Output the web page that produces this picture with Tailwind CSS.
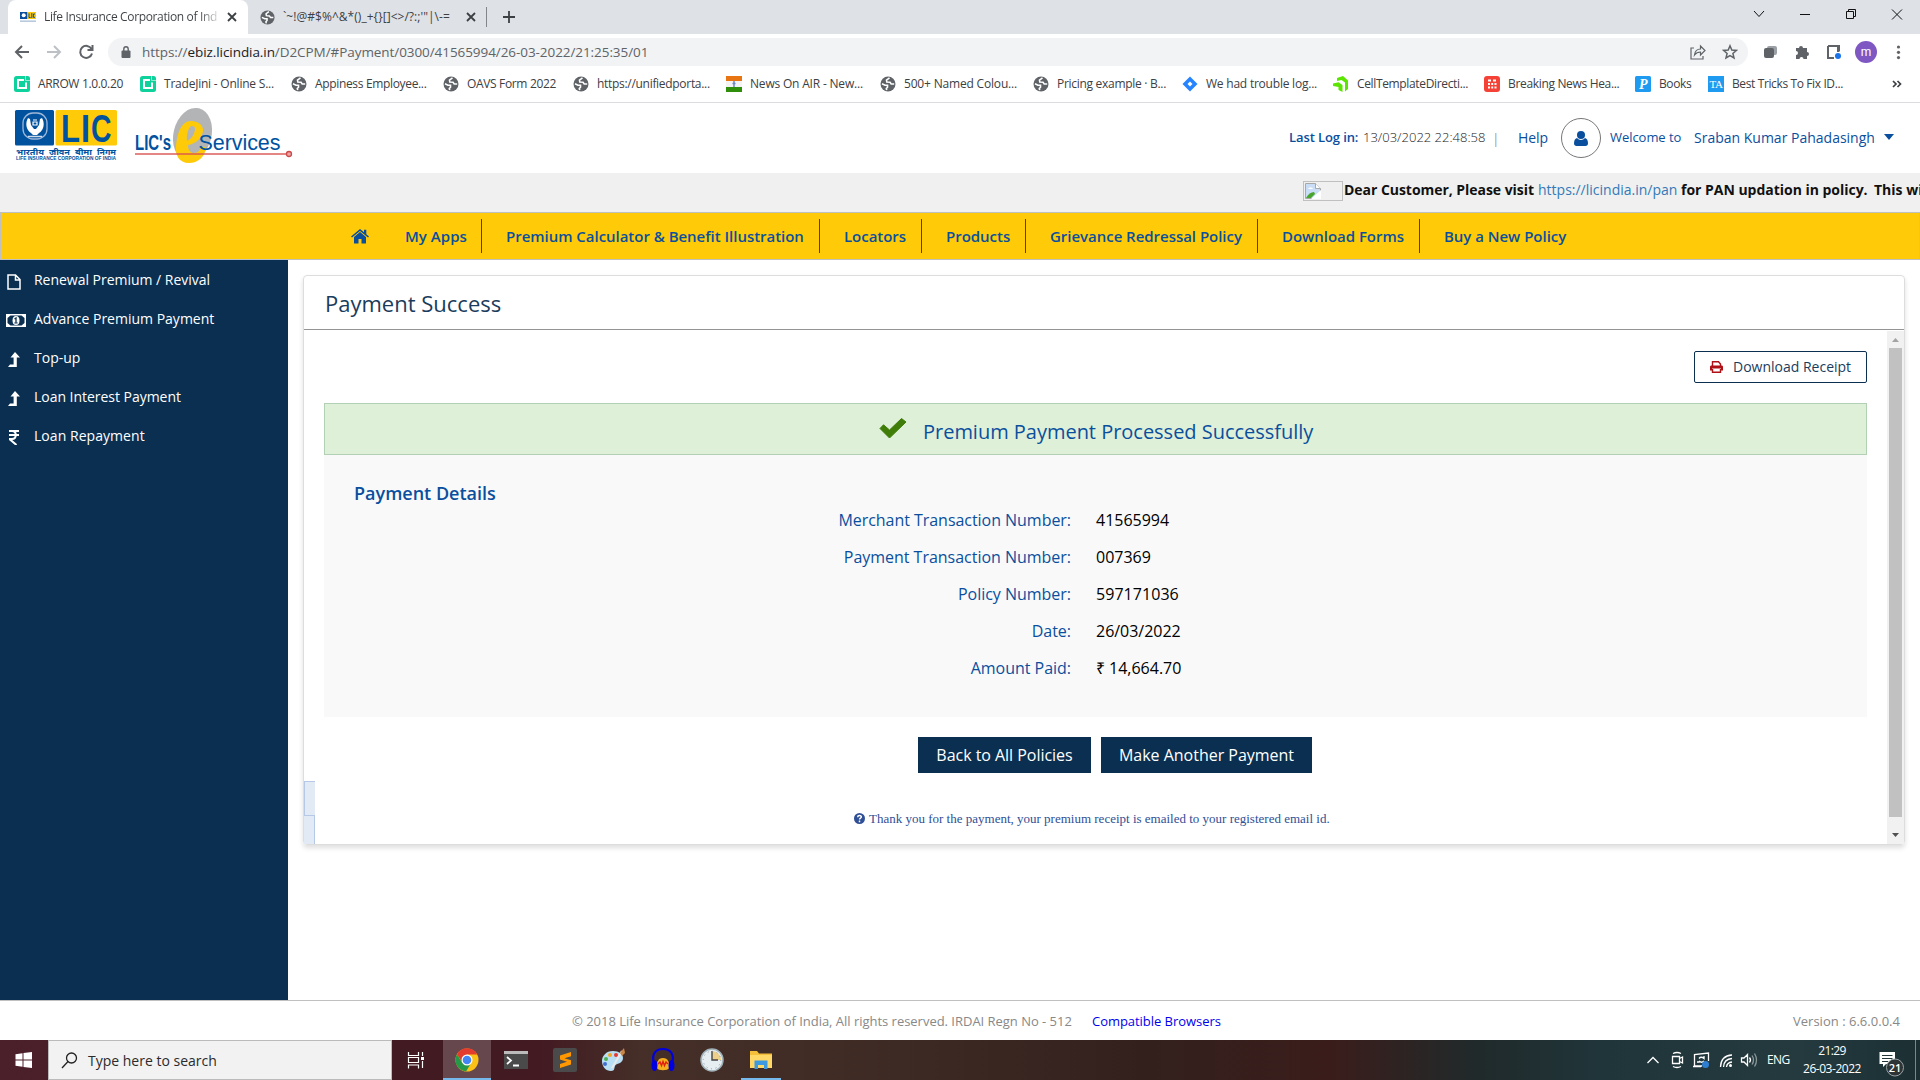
<!DOCTYPE html>
<html lang="en">
<head>
<meta charset="utf-8">
<title>Life Insurance Corporation of India</title>
<script src="https://cdn.jsdelivr.net/npm/@tailwindcss/browser@4"></script>
</head>
<body class="w-[1920px] h-[1080px] overflow-hidden bg-white font-['Open_Sans',sans-serif] whitespace-nowrap flex flex-col">
<svg class="hidden">
  <symbol id="globe" viewBox="0 0 16 16"><circle cx="8" cy="8" r="7.500" fill="#5f6368"/><path d="M9.500 1.800L6.500 4l.3 2 3.200.3 1.200 1.700h3M2 7.800l3 1.400h2.500v2l-1.200 1.200.4 1.800" fill="none" stroke="#fff" stroke-width="1.600"/></symbol>
  <symbol id="bracket" viewBox="0 0 16 16"><rect width="16" height="16" rx="2.500" fill="#0fd19c"/><path d="M10 4H4v8h8V6.500" fill="none" stroke="#fff" stroke-width="2"/><path d="M11.500 0v4.500H16" stroke="#b5f3e0" stroke-width=".8" fill="none"/></symbol>
  <symbol id="close" viewBox="0 0 10 10"><path d="M1 1l8 8M9 1L1 9" stroke="#3c4043" stroke-width="1.800"/></symbol>
  <symbol id="levelup" viewBox="0 0 12 15"><path d="M7 0l5 5.500H8.800V15H0l2-2.600h3.600V5.500H2.500z" fill="#fff"/></symbol>
</svg>

<!-- browser tabs -->
<div class="h-[34px] shrink-0 bg-[#dee1e6] flex text-[12px] text-[#3c4043]">
  <div class="ml-2 w-[240px] h-[34px] bg-white rounded-t-lg flex items-center pl-3">
    <svg class="w-4 h-4 shrink-0" viewBox="0 0 16 16"><rect y="3" width="7.500" height="7" fill="#0a4f9e"/><circle cx="3.700" cy="6.300" r="2" fill="#fff"/><rect x="7.500" y="3" width="8.500" height="7" fill="#ffcb08"/><path d="M9 4.300v4.200h1.600M11.800 4v5M15 5h-1.600v3.300H15" stroke="#0a4f9e" fill="none"/><rect y="11.500" width="16" height="1.300" fill="#a9bdd6"/></svg>
    <div class="ml-2 w-[175px] overflow-hidden tracking-[-0.36px] bg-[linear-gradient(90deg,#3c4043_155px,transparent_178px)] bg-clip-text text-transparent">Life Insurance Corporation of Ind</div>
    <svg class="ml-2 w-[10px] h-[10px]"><use href="#close"/></svg>
  </div>
  <div class="w-[239px] flex items-center pl-3 border-r border-[#80868b] h-5 my-[7px]">
    <svg class="w-[15px] h-[15px]"><use href="#globe"/></svg>
    <div class="ml-2 w-[183px] tracking-[0.04px]">`~!@#$%^&amp;*()_+{}[]&lt;&gt;/?:;'"|\-=</div>
    <svg class="w-[10px] h-[10px]"><use href="#close"/></svg>
  </div>
  <svg class="ml-4 mt-[11px] w-3 h-3" viewBox="0 0 12 12"><path d="M6 0v12M0 6h12" stroke="#3c4043" stroke-width="1.800"/></svg>
  <svg class="ml-auto mr-[17px] w-[152px] h-[34px]" viewBox="1751 0 152 34" fill="none" stroke="#111"><path d="M1754 11l5 5.500 5-5.500M1800 14.500h10M1846.500 11.500h7v7h-7zM1848.500 11.500v-2h7v7h-2M1892 9.500l10 10M1902 9.500l-10 10"/></svg>
</div>

<!-- address bar -->
<div class="h-8 shrink-0 pt-1 flex">
  <svg class="w-[108px] h-7 shrink-0" viewBox="0 38 108 28" fill="none" stroke="#5f6368" stroke-width="2"><path d="M29 52H16M22 46l-6 6 6 6"/><path d="M47 52h13M54 46l6 6-6 6" stroke="#bdc1c6"/><path d="M91.500 49A6 6 0 1 0 92 53.500M92.500 45v5h-5"/></svg>
  <div class="w-[1640px] h-7 rounded-full bg-[#f1f3f4] flex items-center pl-[13px] pr-[10px]">
    <svg class="w-[10px] h-3" viewBox="0 0 10 12"><rect x="0.500" y="4.500" width="9" height="7.500" rx="1" fill="#5f6368"/><path d="M2.800 5V3a2.200 2.200 0 0 1 4.400 0v2" fill="none" stroke="#5f6368" stroke-width="1.400"/></svg>
    <span class="ml-[11px] text-[13.500px] tracking-[-0.07px] text-[#5f6368]">https://<span class="text-[#202124]">ebiz.licindia.in</span>/D2CPM/#Payment/0300/41565994/26-03-2022/21:25:35/01</span>
    <svg class="ml-auto w-12 h-4" viewBox="0 0 48 16" fill="none" stroke="#5f6368" stroke-width="1.200"><path d="M4 4H1v11h12v-3M4.500 11c.5-4 3-6 6-6V2l4.500 4.500L10.500 11V8C8 8 6 9 4.500 11z"/><path d="M40 1.800l1.800 4.200 4.600.4-3.500 3 1.100 4.500-4-2.400-4 2.400 1.100-4.500-3.500-3 4.600-.4z" stroke-width="1.500"/></svg>
  </div>
  <svg class="w-[172px] h-7" viewBox="1748 38 172 28"><rect x="1767" y="46" width="10" height="9" rx="2" fill="#9aa0a6"/><rect x="1764" y="48" width="10" height="10" rx="2" fill="#5f6368"/><path d="M1796 48h3a2 2 0 1 1 4 0h4v4a2 2 0 1 1 0 4v3h-3.500a2 2 0 0 0-4 0H1796v-4a2 2 0 0 0 0-4z" fill="#5f6368"/><path d="M1828 46h11v5M1828 46v12h6" fill="none" stroke="#5f6368" stroke-width="2"/><path d="M1837 46h2.500v6h-2.500z" fill="#5f6368"/><circle cx="1838" cy="56" r="3" fill="#1a73e8"/><circle cx="1866" cy="52" r="11" fill="#7e57c2"/><text x="1866" y="56" text-anchor="middle" font-family="Roboto" font-size="12" fill="#fff">m</text><g fill="#5f6368"><circle cx="1898.500" cy="47" r="1.600"/><circle cx="1898.500" cy="52.300" r="1.600"/><circle cx="1898.500" cy="57.600" r="1.600"/></g></svg>
</div>

<!-- bookmarks -->
<div class="h-[37px] shrink-0 border-b border-[#dadce0] pl-[14px] flex items-center text-[12px] text-[#3c4043] [&_svg]:w-4 [&_svg]:h-4 [&_svg]:shrink-0 [&>div]:flex [&>div]:items-center [&>div]:gap-2">
  <div class="w-[126px] tracking-[-0.34px]"><svg><use href="#bracket"/></svg>ARROW 1.0.0.20</div>
  <div class="w-[151px] tracking-[-0.22px]"><svg><use href="#bracket"/></svg>TradeJini - Online S...</div>
  <div class="w-[152px] tracking-[-0.34px]"><svg><use href="#globe"/></svg>Appiness Employee...</div>
  <div class="w-[130px] tracking-[-0.34px]"><svg><use href="#globe"/></svg>OAVS Form 2022</div>
  <div class="w-[153px] tracking-[-0.3px]"><svg><use href="#globe"/></svg>https://unifiedporta...</div>
  <div class="w-[154px] tracking-[-0.19px]"><svg viewBox="0 0 16 16"><rect width="16" height="5" fill="#e87511"/><rect y="5" width="16" height="6" fill="#f3f3f3"/><rect y="11" width="16" height="5" fill="#2f8f0b"/><path d="M8 5v6M6.500 7.500h3" stroke="#6b86c4" stroke-width="1.500"/></svg>News On AIR - New...</div>
  <div class="w-[153px] tracking-[-0.18px]"><svg><use href="#globe"/></svg>500+ Named Colou...</div>
  <div class="w-[149px] tracking-[-0.29px]"><svg><use href="#globe"/></svg>Pricing example · B...</div>
  <div class="w-[151px] tracking-[-0.22px]"><svg viewBox="0 0 16 16"><path d="M8 .5L15.500 8 8 15.500.5 8z" fill="#2684ff"/><path d="M8 5.500L10.500 8 8 10.500 5.500 8z" fill="#fff"/></svg>We had trouble log...</div>
  <div class="w-[151px] tracking-[-0.35px]"><svg viewBox="0 0 16 16" fill="#5ce500"><path d="M4 2l6-2 5 4.500V13l-3 2.500V6.500L8.500 4 4 5z"/><path d="M0 7.500l5.500-1.300L9.500 9v7L5.500 14v-3L0 10z"/></svg>CellTemplateDirecti...</div>
  <div class="w-[151px] tracking-[-0.33px]"><svg viewBox="0 0 16 16"><rect width="16" height="16" rx="3" fill="#f44336"/><path d="M4 4.500h3M9 4.500h3M4 8h2M7.200 8h2M10.500 8h2M4 11.500h2M7.200 11.500h2M10.500 11.500h2" stroke="#fff" stroke-width="1.800"/></svg>Breaking News Hea...</div>
  <div class="w-[73px] tracking-[-0.4px]"><svg viewBox="0 0 16 16"><rect width="16" height="16" rx="1.500" fill="#1e9bf0"/><text x="8" y="12.500" text-anchor="middle" font-family="Liberation Serif" font-style="italic" font-weight="bold" font-size="14" fill="#fff">P</text></svg>Books</div>
  <div class="tracking-[-0.38px]"><svg viewBox="0 0 16 16"><rect width="16" height="16" fill="#1e9bf0"/><text x="8" y="12" text-anchor="middle" font-family="Liberation Serif" font-size="11" fill="#fff">TA</text></svg>Best Tricks To Fix ID...</div>
  <svg class="ml-auto mr-[15px]" viewBox="0 0 16 16" fill="none" stroke="#3c4043" stroke-width="1.700"><path d="M4 5l3 3-3 3M8.500 5l3 3-3 3"/></svg>
</div>

<!-- site header -->
<header class="h-[70px] shrink-0 flex text-[#0a4f9e]">
  <svg class="w-[310px] h-[70px] shrink-0" viewBox="0 103 310 70">
    <rect x="15" y="110" width="39" height="35.500" rx="1.500" fill="#00529f"/><rect x="55.500" y="110" width="61.500" height="35.500" rx="1.500" fill="#ffcb08"/>
    <rect x="23" y="113" width="24" height="26" rx="10" fill="none" stroke="#9db8d8" stroke-width="1.300"/>
    <path d="M28 118c-3 5-2 12 3 15l2 2h4l2-2c5-3 6-10 3-15l-2 1-1 6-3 4h-2l-3-4-1-6z" fill="#fff"/><path d="M33 122h4v3h-4zM33 120h4" stroke="#fff" stroke-width="1.200" fill="none"/><path d="M28 136.500h14" stroke="#cfdcec" stroke-width="1.500"/>
    <g font-family="Liberation Sans" font-weight="bold" font-size="39" fill="#00529f"><text x="61" y="141.500" textLength="19" lengthAdjust="spacingAndGlyphs">L</text><text x="81" y="141.500" textLength="9" lengthAdjust="spacingAndGlyphs">I</text><text x="91" y="141.500" textLength="20.500" lengthAdjust="spacingAndGlyphs">C</text></g>
    <g font-family="Noto Sans Devanagari,Noto Sans,sans-serif" font-weight="bold" font-size="8" fill="#00529f"><text x="16" y="155" textLength="28" lengthAdjust="spacingAndGlyphs">भारतीय</text><text x="49" y="155" textLength="21" lengthAdjust="spacingAndGlyphs">जीवन</text><text x="75" y="155" textLength="17" lengthAdjust="spacingAndGlyphs">बीमा</text><text x="97" y="155" textLength="19" lengthAdjust="spacingAndGlyphs">निगम</text></g>
    <text x="16" y="160" textLength="100" lengthAdjust="spacingAndGlyphs" font-family="Liberation Sans" font-weight="bold" font-size="4.800" fill="#00529f">LIFE INSURANCE CORPORATION OF INDIA</text>
    <ellipse cx="192.500" cy="134.500" rx="19" ry="27" transform="rotate(14 192.500 134.500)" fill="#b3b4b6"/>
    <text x="135" y="150" textLength="36" lengthAdjust="spacingAndGlyphs" font-family="Liberation Sans" font-weight="bold" font-size="22" fill="#00529f">LIC's</text>
    <path fill-rule="evenodd" d="M191 121c7 0 12 4 12 9 0 8-8 14-15 15 0 6 3 8 6 8 4 0 6-3 7-6h5c-1 10-8 16-17 16-10 0-14-8-13-17 1-14 6-25 15-25zm-4 20c5-2 8-8 8-12 0-2-1-3-3-3-3 0-6 8-5 15z" fill="#ffcb08"/>
    <path d="M135 154h151" stroke="#d9534f" stroke-opacity=".7" stroke-width="1.800"/><circle cx="289" cy="154" r="2.500" fill="#eba6a6" stroke="#cf4848" stroke-width="1.300"/>
    <text x="198.500" y="150" textLength="82" font-family="Liberation Sans" font-size="21.500" fill="#00529f">Services</text>
  </svg>
  <div class="ml-auto w-[631px] flex items-center text-[14px] mt-[-2px]">
    <b class="w-[74px] pt-[2px] text-[13px] font-semibold tracking-[-0.1px]">Last Log in:</b>
    <span class="w-[129px] pt-[2px] text-[#222] font-light text-[13px]">13/03/2022 22:48:58</span>
    <span class="w-[26px] pt-[2px] text-[#6a5a70] font-light">|</span>
    <span class="w-[43px] tracking-[-0.07px]">Help</span>
    <span class="w-10 h-10 mt-[2px] rounded-full border border-[#777] flex items-center justify-center"><svg class="w-[14px] h-[15px]" viewBox="0 0 14 15" fill="#0a4f9e"><circle cx="7" cy="4" r="4"/><path d="M3 7c1 1.300 2.500 2 4 2s3-.7 4-2c2 .5 3 2.500 3 5.500 0 1.500-1 2.500-2.500 2.500h-9C1 15 0 14 0 12.500 0 9.500 1 7.500 3 7z"/></svg></span>
    <span class="ml-[9px] w-[84px] pt-px text-[13px] tracking-[-0.05px]">Welcome to</span>
    <span class="w-[190px]">Sraban Kumar Pahadasingh</span>
    <svg class="w-[10px] h-[6px]" viewBox="0 0 10 6"><path d="M0 0h10L5 6z" fill="#0a4f9e"/></svg>
  </div>
</header>

<!-- scrolling notice -->
<div class="h-[39px] shrink-0 bg-[#f0f0f0] flex items-start pt-[6px] pl-[1303px] overflow-hidden text-[14px] text-[#111]">
  <span class="w-10 h-5 mt-[2px] border border-[#c0c0c0] shrink-0 p-px"><svg class="w-4 h-4" viewBox="0 0 16 16"><path d="M.5.500h10l5 5v10H.5z" fill="#c9ddf7" stroke="#a8a8a8"/><path d="M10.500.500v5h5" fill="#fff" stroke="#a8a8a8"/><path d="M3 6c1-2 4-2 5 0z" fill="#fff"/><path d="M1 15c2-4 5-6 8-6l1 2-4 4z" fill="#4aa52e"/><path d="M6 16L16 7v9z" fill="#fff"/></svg></span>
  <b class="w-[195px] pl-px font-bold shrink-0 tracking-[-0.04px]">Dear Customer, Please visit</b>
  <span class="w-[143px] text-[#337ab7] shrink-0">https://licindia.in/pan</span>
  <b class="w-[193px] font-bold shrink-0 tracking-[-0.02px]">for PAN updation in policy.</b>
  <b class="font-bold shrink-0">This will</b>
</div>

<!-- main navigation -->
<nav class="h-[48px] shrink-0 border border-[#c0c0c0] bg-[#ffcb08] flex items-center text-[15px] font-semibold text-[#0a4f9e] tracking-[-0.03px] pl-[350px] [&>div]:h-[34px] [&>div]:flex [&>div]:items-center [&>div]:pl-6 [&>div]:border-r [&>div]:border-[#0a4f9e]">
  <svg class="w-[18px] h-[15px]" viewBox="0 0 18 15" fill="#0a4f9e"><path d="M9 3l6 5v6.500h-4.500V10h-3v4.500H3V8z"/><path d="M0 7.500L9 0l4 3.300V.800h2.300v4.400L18 7.500l-1 1L9 2 1 8.500z"/></svg>
  <div class="ml-[11px] w-[102px] !pl-[25px] tracking-[0.03px]">My Apps</div>
  <div class="w-[338px]">Premium Calculator &amp; Benefit Illustration</div>
  <div class="w-[102px]">Locators</div>
  <div class="w-[104px]">Products</div>
  <div class="w-[232px]">Grievance Redressal Policy</div>
  <div class="w-[162px]">Download Forms</div>
  <div class="!border-r-0">Buy a New Policy</div>
</nav>

<!-- body -->
<div class="flex h-[740px] shrink-0">
  <aside class="w-[288px] bg-[#0a2f51] text-white text-[14px] [&>div]:h-[39px] [&>div]:flex [&>div]:items-center [&>div>i]:w-[34px] [&>div>i]:pl-[7px] [&>div>i]:pt-1">
    <div class="tracking-[-0.02px]"><i><svg class="w-[14px] h-4" viewBox="0 0 14 16" fill="none" stroke="#fff" stroke-width="1.500"><path d="M1 1h7.500L13 5.500V15H1zM8.500 1v5H13"/></svg></i>Renewal Premium / Revival</div>
    <div><i class="!pl-[6px]"><svg class="w-5 h-[13px]" viewBox="0 0 20 13"><rect width="20" height="13" fill="#fff"/><path d="M4.500 1.500h11l3 2.500v5l-3 2.500h-11L1.500 9V4z" fill="#0a2f51"/><ellipse cx="10" cy="6.500" rx="3.500" ry="4.500" fill="#fff"/><path d="M8.500 5l1.500-1v4M8.500 8.800h3" stroke="#0a2f51" stroke-width="1.300" fill="none"/></svg></i>Advance Premium Payment</div>
    <div><i class="!pl-2 !pt-[3px]"><svg class="w-3 h-[15px]"><use href="#levelup"/></svg></i>Top-up</div>
    <div class="tracking-[-0.03px]"><i class="!pl-2 !pt-[3px]"><svg class="w-3 h-[15px]"><use href="#levelup"/></svg></i>Loan Interest Payment</div>
    <div class="tracking-[0.05px]"><i class="!pl-[9px] !pt-[3px]"><svg class="w-[10px] h-[15px]" viewBox="0 0 10 15" fill="none" stroke="#fff" stroke-width="2"><path d="M0 1h10M0 5h10M0 1h3c5 0 5 8 0 8H.5L7.500 15"/></svg></i>Loan Repayment</div>
  </aside>

  <main class="ml-[15px] mt-[15px] w-[1602px] h-[570px] border border-[#ddd] rounded-sm shadow-[0_3px_5px_rgba(0,0,0,0.13)] relative">
    <h1 class="h-[54px] border-b border-[#949494] pl-[21px] pt-[2px] flex items-center text-[22px] text-[#1b3c5c]">Payment Success</h1>
    <div class="pl-5 w-[1563px]">
      <div class="pt-[21px] flex justify-end">
        <button class="w-[173px] h-8 border border-[#0a2f51] rounded-xs flex items-center pl-[15px] text-[14px] text-[#1b3c5c]">
          <svg class="w-[13px] h-3 mr-[10px]" viewBox="0 0 13 12"><path d="M2.500 5V.700h6L10.500 3v2M2.500 8v3.300h8V8" fill="none" stroke="#b01116" stroke-width="1.400"/><path d="M0 6c0-1 .5-1.500 1.500-1.500h10c1 0 1.500.500 1.500 1.500v3.500h-2v-2H2v2H0z" fill="#b01116"/></svg>
          <span class="pb-[2px]">Download Receipt</span>
        </button>
      </div>
      <div class="mt-5 h-[52px] bg-[#dff0d8] border border-[#b2d0b4] flex items-center pl-[554px] text-[20px] text-[#0a4f9e]">
        <svg class="w-7 h-5 mb-[2px] mr-[16px]" viewBox="0 0 28 20"><path d="M1 10.500l3.500-3.700 6 5.200L22.500.500l4.500 3.500L10.500 20z" fill="#3f7d08" stroke="#3f7d08" stroke-linejoin="round"/></svg>
        <span class="mt-[6px] tracking-[-0.02px]">Premium Payment Processed Successfully</span>
      </div>
      <div class="h-[262px] bg-[#f9f9f9] pt-[26px]">
        <h2 class="pl-[30px] h-6 leading-6 text-[18px] font-semibold text-[#0a4f9e]">Payment Details</h2>
        <div class="grid grid-cols-[747px_1fr] gap-x-[25px] auto-rows-[37px] items-center text-[16px] text-black -mt-1 tracking-[-0.02px] [&>p]:justify-self-end [&>p]:text-[#0a4f9e]">
          <p class="tracking-[-0.04px]">Merchant Transaction Number:</p><span>41565994</span>
          <p>Payment Transaction Number:</p><span>007369</span>
          <p>Policy Number:</p><span class="tracking-[0.05px]">597171036</span>
          <p>Date:</p><span>26/03/2022</span>
          <p>Amount Paid:</p><span>₹ 14,664.70</span>
        </div>
      </div>
      <div class="mt-5 pl-[594px] flex gap-[10px] text-white text-[16px]">
        <button class="w-[173px] h-9 bg-[#0a2f51] tracking-[-0.03px]">Back to All Policies</button>
        <button class="w-[211px] h-9 bg-[#0a2f51] tracking-[-0.02px]">Make Another Payment</button>
      </div>
      <div class="mt-[36px] pl-[530px] flex items-center text-[13px] font-['Liberation_Serif',serif] text-[#2f4f96]">
        <svg class="w-[11px] h-[11px] mr-1" viewBox="0 0 12 12"><circle cx="6" cy="6" r="6" fill="#2f4f96"/><path d="M4 4.500C4 2.200 8 2.200 8 4.300 8 5.500 6 5.600 6 7.200M6 8.300V10" fill="none" stroke="#fff" stroke-width="1.600"/></svg>
        Thank you for the payment, your premium receipt is emailed to your registered email id.
      </div>
    </div>
    <!-- collapsed side handle -->
    <div class="absolute left-0 bottom-0 w-[11px]"><div class="h-[35px] bg-[#e1eaf5] border border-r-0 border-[#b5c9e6]"></div><div class="h-[28px] bg-[#e1eaf5] border-r border-[#b5c9e6]"></div></div>
    <!-- scrollbar -->
    <div class="absolute right-0 top-[55px] w-[17px] h-[513px] bg-[#f1f1f1] flex flex-col items-center justify-between"><svg class="w-[17px] h-[17px]" viewBox="0 0 17 17"><path d="M5 11l3.500-4 3.500 4z" fill="#a3a3a3"/></svg><div class="w-[13px] flex-1 mb-[10px] bg-[#c1c1c1]"></div><svg class="w-[17px] h-[17px]" viewBox="0 0 17 17"><path d="M5 6l3.500 4L12 6z" fill="#505050"/></svg></div>
  </main>
</div>

<footer class="h-10 shrink-0 border-t border-[#c0c0c0] flex items-center pt-[3px] pl-[572px] pr-5 text-[13px] text-[#888]">
  <span class="w-[520px] tracking-[-0.02px]">© 2018 Life Insurance Corporation of India, All rights reserved. IRDAI Regn No - 512</span>
  <span class="text-[#0000ee] tracking-[-0.04px]">Compatible Browsers</span>
  <span class="ml-auto tracking-[0.02px]">Version : 6.6.0.0.4</span>
</footer>

<!-- taskbar -->
<div class="h-10 shrink-0 flex items-center bg-[linear-gradient(90deg,#4b202b_0,#411a22_400px,#431a22_540px,#452f28_640px,#3e2a24_900px,#33201d_1150px,#3a1d1b_1330px,#202a2b_1480px,#20353a_1600px,#243a3e_1800px,#1c3034_1920px)] text-white">
  <svg class="w-12 h-10" viewBox="0 0 48 40" fill="#fff"><path d="M15.500 14.300l7-1v6.200h-7zM23.500 13.100l8.500-1.200v7.600h-8.500zM15.500 20.500h7v6.200l-7-1zM23.500 20.500H32v7.600l-8.500-1.200z"/></svg>
  <div class="w-[344px] h-10 bg-[#f2f2f2] border border-[#bbb] flex items-center pl-3 text-[14px] text-[#2b2b2b]"><svg class="w-[17px] h-[17px] mr-[10px]" viewBox="0 0 17 17" fill="none" stroke="#222" stroke-width="1.300"><circle cx="10.500" cy="6" r="5"/><path d="M7 9.500L1 16"/></svg>Type here to search</div>
  <svg class="w-[51px] h-10" viewBox="392 1040 51 40" fill="none" stroke="#fff" stroke-width="1.200"><path d="M408.500 1052v3.500h10V1052M408.500 1068.500V1065h10v3.500M408.500 1057.500h10v5h-10zM422.500 1052v4M422.500 1061v7"/><path d="M421 1057h3v3h-3z" fill="#fff" stroke="none"/></svg>
  <div class="w-12 h-10 bg-white/20 border-b-2 border-[#76b9ed] flex justify-center items-center"><svg class="w-6 h-6 mt-px" viewBox="0 0 24 24"><circle cx="12" cy="12" r="11.500" fill="#fbc116"/><path d="M12 6.500h10.200A11.500 11.500 0 0 0 2 6.200l5 8z" fill="#e33b2e"/><path d="M2 6.200A11.500 11.500 0 0 0 11 23.500l4.800-8L7 14.500z" fill="#279847"/><circle cx="12" cy="12" r="5.500" fill="#fff"/><circle cx="12" cy="12" r="4.300" fill="#4285f4"/></svg></div>
  <svg class="w-[240px] h-10 ml-[1px]" viewBox="492 1040 240 40">
    <rect x="504" y="1051" width="24" height="18" fill="#4a4a4a"/><rect x="504" y="1051" width="24" height="3" fill="#bbb"/><path d="M507 1057l4 3.500-4 3.500M513 1065.500h6" stroke="#fff" stroke-width="1.800" fill="none"/>
    <rect x="553" y="1048" width="24" height="24" rx="2" fill="#4a4a4a"/><path d="M571 1052l-11 3.500v4l7 2.200-7 2.300v4l11-3.500v-4.200l-6.500-2 6.500-2z" fill="#ff9800"/>
    <path d="M613 1051c-7 0-11 5-11 10 0 6 4 10 9 10 4 0 3-3 4-5 1-3 8-2 8-8 0-4-4-7-10-7z" fill="#b8dff4"/><circle cx="606" cy="1059" r="2" fill="#4caf50"/><circle cx="610" cy="1055" r="2" fill="#f5a623"/><circle cx="616" cy="1055" r="2" fill="#e53935"/><circle cx="605" cy="1064" r="2" fill="#3f6fd0"/><path d="M622 1051l-10 17" stroke="#e8e8e8" stroke-width="2"/><path d="M620 1053l4-5 1 5-3 3z" fill="#c98545"/>
    <path d="M654 1063c-3-9 2-14 9-14s12 5 9 14" fill="none" stroke="#0000e0" stroke-width="2.200"/><path d="M657 1068c-1-5 1-10 6-10s7 5 6 10c-1 3-11 3-12 0z" fill="#f5b020"/><ellipse cx="654.500" cy="1065.500" rx="3" ry="5.500" fill="#0000e0"/><ellipse cx="671.500" cy="1065.500" rx="3" ry="5.500" fill="#0000e0"/><path d="M658 1064l2-2 1.500 3.500 1.500-4 1.500 4 1.500-3.500 2 2" stroke="#e02010" stroke-width="1.400" fill="none"/>
    <circle cx="712" cy="1060" r="11" fill="#e6eef2" stroke="#9fb0b8" stroke-width="1.500"/><path d="M712 1060v-9a9 9 0 0 1 9 9z" fill="#ecd08a"/><path d="M712 1051v9h6" stroke="#444" stroke-width="1.400" fill="none"/><circle cx="712" cy="1060" r="8.800" fill="none" stroke="#8a979d" stroke-dasharray="1 3.600"/>
  </svg>
  <div class="ml-[9px] w-10 h-10 border-b-2 border-[#76b9ed] flex justify-center items-center"><svg class="w-[22px] h-[19px]" viewBox="0 0 22 19"><path d="M0 1h7l2 2.500h13V18H0z" fill="#f5bf3a"/><path d="M0 5h22v13H0z" fill="#ffd867"/><path d="M4.500 19v-8.500h13V19H14v-4H8v4z" fill="#3d9ae0"/></svg></div>
  <svg class="ml-auto w-[122px] h-10" viewBox="1643 1040 122 40" fill="none" stroke="#fff" stroke-width="1.300"><path d="M1647.500 1063l5.500-5.500 5.500 5.500"/><path d="M1672.500 1056.500h7v7h-7zM1679.500 1058.500l3-1.500v6l-3-1.500M1673 1053.500q4-2 8 0M1673 1066.500q4 2 8 0"/><path d="M1702 1066h-7.500v-11.500l14-1.500v8M1693 1066.500h8M1697 1062h2.500M1699 1058.500q2-2.500 5 0v-2.500M1704 1061q-2 2.500-5 0"/><circle cx="1705.500" cy="1064.500" r="3.500" fill="#2f7fd0" stroke="none"/><path d="M1720.500 1067q.5-11.500 11.500-12M1723.500 1067q.5-8 8.500-8.500M1726.500 1067q.5-4.500 5.500-5"/><circle cx="1730.500" cy="1065.500" r="1.500" fill="#fff" stroke="none"/><path d="M1741.500 1058h2.500l3.500-3.500v11l-3.500-3.500h-2.500zM1749.500 1057.500q2 2.500 0 5"/><path d="M1752 1055.500q3 4.500 0 9M1754.500 1053.500q4 6.500 0 13" stroke="#8b989a"/></svg>
  <span class="ml-[2px] w-[36px] text-[12px] tracking-[-0.6px]">ENG</span>
  <div class="w-[58px] text-[12px] leading-[18px] text-center"><span class="tracking-[-0.6px]">21:29</span><br><span class="tracking-[-0.46px]">26-03-2022</span></div>
  <svg class="ml-[17px] w-[42px] h-10" viewBox="1878 1040 42 40"><path d="M1879.500 1052h15.500v12h-9l-3 3v-3h-3.500z" fill="#fff"/><path d="M1882 1055.500h10.500M1882 1058.500h10.500M1882 1061.500h6" stroke="#22363a" stroke-width="1.200"/><circle cx="1895" cy="1067.500" r="8.500" fill="#2e3436" stroke="#9aa3a5"/><text x="1895" y="1071.500" text-anchor="middle" font-family="Open Sans" font-weight="600" font-size="11" fill="#fff">21</text><path d="M1915.500 1040v40" stroke="#7a888b"/></svg>
</div>
</body>
</html>
